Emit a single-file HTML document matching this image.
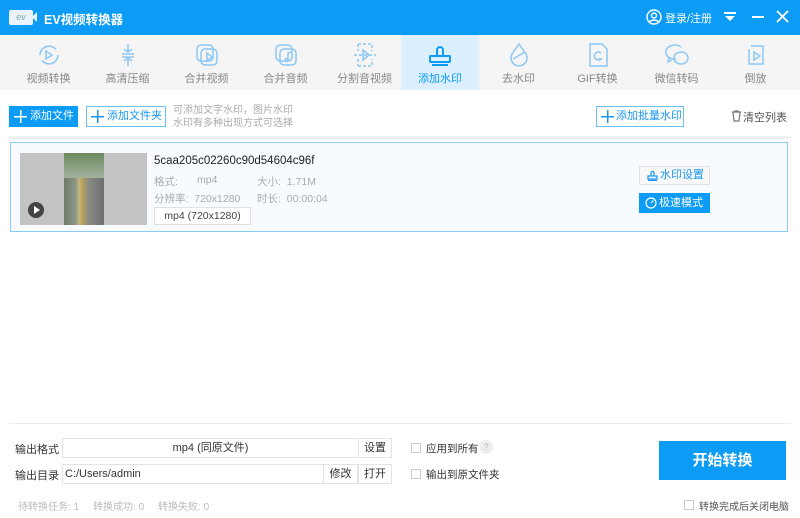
<!DOCTYPE html>
<html><head><meta charset="utf-8"><style>
*{margin:0;padding:0;box-sizing:border-box}
body{width:800px;height:518px;overflow:hidden;background:#fff;font-family:"Liberation Sans","Noto Sans CJK SC",sans-serif;font-size:11px;color:#333;position:relative;white-space:nowrap}
.abs{position:absolute}
.title{left:0;top:0;width:800px;height:35px;background:#0c9bf5;color:#fff}
.tb{left:0;top:35px;width:800px;height:55px;background:#f5f5f5}
.tab{position:absolute;top:0;width:79px;height:55px;text-align:center;color:#888;font-size:11px}
.tab svg{display:block;margin:7px auto 2px;width:26px;height:26px}
.tab.act{background:#dcefff;color:#0c9bf5}
.btn{position:absolute;height:21px;line-height:19px;font-size:11px;border:1px solid #6cbff5;color:#1a96f0;padding-left:18px}
.btn:before{content:"";position:absolute;left:4px;top:3px;width:13px;height:13px;background:linear-gradient(currentColor,currentColor) center/13px 1.5px no-repeat,linear-gradient(currentColor,currentColor) center/1.5px 13px no-repeat}
.gray{color:#aaa}
.in{position:absolute;height:20px;border:1px solid #e3e3e3;background:#fff;line-height:18px;font-size:11px}
.cb{position:absolute;width:10px;height:10px;border:1px solid #ccc;background:#fff}
</style></head><body>
<div class="abs title">
 <div class="abs" style="left:9px;top:10px;width:24px;height:15px;background:#eaf3fb;border-radius:2px;color:#7aa;font-size:9px;font-style:italic;text-align:center;line-height:15px">ev</div>
 <div class="abs" style="left:32px;top:12px;width:0;height:0;border-top:5px solid transparent;border-bottom:5px solid transparent;border-right:5px solid #eaf3fb"></div>
 <div class="abs" style="left:44px;top:9px;font-size:12.5px;font-weight:bold">EV视频转换器</div>
 <svg class="abs" style="left:646px;top:9px" width="16" height="16" viewBox="0 0 16 16" fill="none" stroke="#fff" stroke-width="1.4"><circle cx="8" cy="8" r="7"/><circle cx="8" cy="6.5" r="2.5"/><path d="M3.5 13c1.5-2.5 7.5-2.5 9 0"/></svg>
 <div class="abs" style="left:665px;top:10px;font-size:11px">登录/注册</div>
 <svg class="abs" style="left:723px;top:11px" width="14" height="12" viewBox="0 0 14 12" fill="#fff"><rect x="1" y="1" width="12" height="2"/><path d="M2 5h10l-5 5z"/></svg>
 <div class="abs" style="left:752px;top:16px;width:12px;height:2px;background:#fff"></div>
 <svg class="abs" style="left:776px;top:10px" width="13" height="13" viewBox="0 0 13 13" stroke="#fff" stroke-width="1.8"><path d="M1 1l11 11M12 1L1 12"/></svg>
</div>
<div class="abs tb">
 <div class="tab" style="left:9px"><svg viewBox="0 0 26 26" fill="none" stroke="#8cc8f5" stroke-width="1.5"><path d="M4 13a9 9 0 0 1 16-5.5M22 13a9 9 0 0 1-16 5.5"/><path d="M10 9v8l6-4z"/></svg>视频转换</div>
 <div class="tab" style="left:88px"><svg viewBox="0 0 26 26" fill="none" stroke="#8cc8f5" stroke-width="1.5"><path d="M13 2v8M9 7l4 3 4-3M7 12h12M7 15h12M13 24v-8M9 19l4-3 4 3"/></svg>高清压缩</div>
 <div class="tab" style="left:167px"><svg viewBox="0 0 26 26" fill="none" stroke="#8cc8f5" stroke-width="1.5"><rect x="3" y="3" width="16" height="16" rx="4"/><rect x="7" y="7" width="16" height="16" rx="4"/><path d="M13 11v8l5-4z"/></svg>合并视频</div>
 <div class="tab" style="left:246px"><svg viewBox="0 0 26 26" fill="none" stroke="#8cc8f5" stroke-width="1.5"><rect x="3" y="3" width="16" height="16" rx="4"/><rect x="7" y="7" width="16" height="16" rx="4"/><path d="M15 18v-7l3-1"/><circle cx="13.5" cy="18" r="1.5"/></svg>合并音频</div>
 <div class="tab" style="left:325px"><svg viewBox="0 0 26 26" fill="none" stroke="#8cc8f5" stroke-width="1.5"><path d="M6 2h14v7M6 24h14v-7M6 2v7M6 17v7M2 13h22" stroke-dasharray="3 2"/><path d="M11 8v10l6-5z"/></svg>分割音视频</div>
 <div class="tab act" style="left:401px;width:78px"><svg viewBox="0 0 26 26" fill="none" stroke="#0c9bf5" stroke-width="2"><path d="M10 14V8a3 3 0 1 1 6 0v6"/><rect x="3" y="14" width="20" height="6" rx="1"/><path d="M5 23h16"/></svg>添加水印</div>
 <div class="tab" style="left:479px"><svg viewBox="0 0 26 26" fill="none" stroke="#8cc8f5" stroke-width="1.5"><path d="M13 2l7 10a8 8 0 1 1-14 0z"/><path d="M7 17l12-7"/></svg>去水印</div>
 <div class="tab" style="left:558px"><svg viewBox="0 0 26 26" fill="none" stroke="#8cc8f5" stroke-width="1.5"><path d="M5 2h12l5 5v17H5z"/><path d="M16 11a4 4 0 1 0 0 6h-3"/></svg>GIF转换</div>
 <div class="tab" style="left:637px"><svg viewBox="0 0 26 26" fill="none" stroke="#8cc8f5" stroke-width="1.5"><path d="M12 17a9 7 0 1 1 5-12M5 16l-1 4 4-2"/><ellipse cx="17" cy="16" rx="7" ry="6"/></svg>微信转码</div>
 <div class="tab" style="left:716px"><svg viewBox="0 0 26 26" fill="none" stroke="#8cc8f5" stroke-width="1.5"><path d="M8 4h12v18H6V7"/><path d="M11 10v8l6-4z"/></svg>倒放</div>
</div>
<div class="btn" style="left:9px;top:106px;width:69px;background:#0c9bf5;border-color:#0c9bf5;color:#fff;padding-left:20px">添加文件</div>
<div class="btn" style="left:86px;top:106px;width:80px;padding-left:20px">添加文件夹</div>
<div class="abs gray" style="left:173px;top:104px;font-size:10px;line-height:13px">可添加文字水印，图片水印<br>水印有多种出现方式可选择</div>
<div class="btn" style="left:596px;top:106px;width:88px;padding-left:19px">添加批量水印</div>
<svg class="abs" style="left:731px;top:110px" width="11" height="12" viewBox="0 0 11 12" fill="none" stroke="#777" stroke-width="1.2"><path d="M1 2h9M4 2V1h3v1M2 2l1 9h5l1-9"/></svg>
<div class="abs" style="left:743px;top:109px;color:#555">清空列表</div>
<div class="abs" style="left:9px;top:136px;width:782px;height:3px;background:#f1f1f1"></div>
<div class="abs" style="left:10px;top:142px;width:778px;height:90px;border:1px solid #8ccaf6;background:#f7fbff">
 <div class="abs" style="left:9px;top:10px;width:127px;height:72px;background:#c3c3c3"></div>
 <div class="abs" style="left:53px;top:10px;width:40px;height:72px;background:linear-gradient(90deg,#6b7a6a 0,#8e9a88 30%,#c6b77c 38%,#b49d5a 48%,#8a8c86 60%,#6c7070 100%)"></div>
 <div class="abs" style="left:53px;top:10px;width:40px;height:25px;background:linear-gradient(#6c8a5e,#a4b09c)"></div>
 <div class="abs" style="left:17px;top:59px;width:16px;height:16px;border-radius:50%;background:#444"></div>
 <div class="abs" style="left:23px;top:63px;border-left:6px solid #fff;border-top:4px solid transparent;border-bottom:4px solid transparent"></div>
 <div class="abs" style="left:143px;top:12px;font-size:11.5px;color:#222">5caa205c02260c90d54604c96f</div>
 <div class="abs gray" style="left:143px;top:31px;font-size:10.5px">格式:</div>
 <div class="abs gray" style="left:186px;top:31px;font-size:10.5px">mp4</div>
 <div class="abs gray" style="left:246px;top:31px;font-size:10.5px">大小:&nbsp;&nbsp;1.71M</div>
 <div class="abs gray" style="left:143px;top:48px;font-size:10.5px">分辨率:&nbsp;&nbsp;720x1280</div>
 <div class="abs gray" style="left:246px;top:48px;font-size:10.5px">时长:&nbsp;&nbsp;00:00:04</div>
 <div class="abs" style="left:143px;top:64px;width:97px;height:18px;border:1px solid #e0e0e0;background:#fff;text-align:center;line-height:16px;font-size:10.5px;color:#444">mp4 (720x1280)</div>
 <div class="abs" style="left:628px;top:23px;width:71px;height:19px;border:1px solid #e2e2e2;background:#f8f8f8;color:#1a96f0;line-height:17px;padding-left:20px;font-size:11px">水印设置</div>
 <svg class="abs" style="left:636px;top:27px" width="11" height="11" viewBox="0 0 11 11" fill="none" stroke="#1a96f0" stroke-width="1.2"><path d="M4 6V3a1.5 1.5 0 0 1 3 0v3M1 6h9v3H1zM1 10.5h9"/></svg>
 <div class="abs" style="left:628px;top:50px;width:71px;height:20px;background:#0c9bf5;color:#fff;line-height:20px;padding-left:20px;font-size:11px">极速模式</div>
 <svg class="abs" style="left:634px;top:54px" width="12" height="12" viewBox="0 0 12 12" fill="none" stroke="#fff" stroke-width="1.2"><circle cx="6" cy="6" r="5"/><path d="M6 6l2.5-2.5"/></svg>
</div>
<div class="abs" style="left:9px;top:423px;width:782px;height:1px;background:#ececec"></div>
<div class="abs" style="left:15px;top:441px">输出格式</div>
<div class="in" style="left:62px;top:438px;width:297px;text-align:center">mp4 (同原文件)</div>
<div class="in" style="left:358px;top:438px;width:34px;text-align:center">设置</div>
<div class="cb" style="left:411px;top:443px"></div>
<div class="abs" style="left:426px;top:441px;font-size:10.5px">应用到所有</div>
<div class="abs" style="left:479px;top:440px;width:14px;height:14px;border-radius:50%;background:#eee;color:#bbb;font-size:9px;text-align:center;line-height:14px">?</div>
<div class="abs" style="left:15px;top:467px">输出目录</div>
<div class="in" style="left:62px;top:464px;width:262px;padding-left:2px">C:/Users/admin</div>
<div class="in" style="left:323px;top:464px;width:35px;text-align:center">修改</div>
<div class="in" style="left:358px;top:464px;width:34px;text-align:center">打开</div>
<div class="cb" style="left:411px;top:469px"></div>
<div class="abs" style="left:426px;top:467px;font-size:10.5px">输出到原文件夹</div>
<div class="abs" style="left:659px;top:441px;width:127px;height:39px;background:#0c9bf5;color:#fff;font-size:15px;font-weight:bold;text-align:center;line-height:39px">开始转换</div>
<div class="abs" style="left:18px;top:498px;font-size:10px;color:#bbb">待转换任务:&nbsp;1&nbsp;&nbsp;&nbsp;&nbsp;&nbsp;转换成功:&nbsp;0&nbsp;&nbsp;&nbsp;&nbsp;&nbsp;转换失败:&nbsp;0</div>
<div class="cb" style="left:684px;top:500px"></div>
<div class="abs" style="left:699px;top:498px;font-size:10px;color:#555">转换完成后关闭电脑</div>
</body></html>
